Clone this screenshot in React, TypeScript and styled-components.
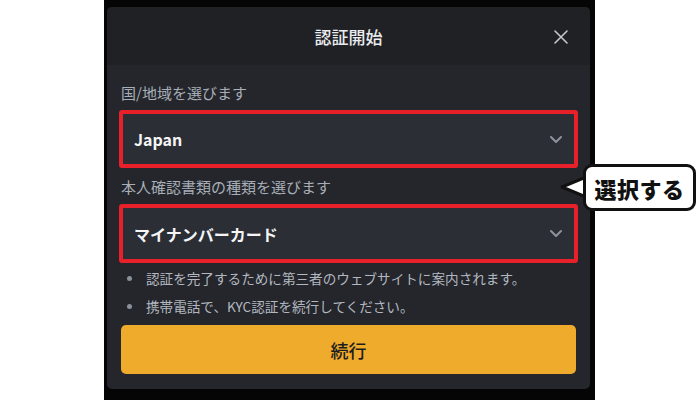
import styled, {createGlobalStyle} from "styled-components";

const GlobalStyle = createGlobalStyle`
    html, body {
        margin: 0;
        padding: 0;
        background: #ffffff;
    }
    body {
        font-family: "Noto Sans CJK JP", "Noto Sans", "Liberation Sans", sans-serif;
    }
`;

const Page = styled.div`
    position: relative;
    width: 700px;
    height: 400px;
    overflow: hidden;
    background: #ffffff;
    display: flex;
    padding-left: 104px;
    box-sizing: border-box;
`;

const Frame = styled.div`
    width: 491px;
    height: 400px;
    background: #050505;
    box-sizing: border-box;
    padding: 7px 5px 11px 3px;
`;

const Card = styled.div`
    height: 100%;
    background: #24262b;
    border-radius: 5px;
    overflow: hidden;
    display: flex;
    flex-direction: column;
`;

const Header = styled.div`
    position: relative;
    height: 58px;
    flex-shrink: 0;
    background: #1f2125;
    display: flex;
    align-items: center;
    justify-content: center;
    color: #eaecef;
    font-size: 17px;
    font-weight: 500;
`;

const CloseButton = styled.div`
    position: absolute;
    right: 21px;
    top: 22px;
    width: 16px;
    height: 16px;
    display: flex;
`;

const Body = styled.div`
    flex: 1;
    padding: 18px 12px 15px;
    display: flex;
    flex-direction: column;
`;

const Label = styled.div<{ $top: number }>`
    margin-top: ${p => p.$top}px;
    padding-left: 2px;
    height: 20px;
    line-height: 20px;
    font-size: 15px;
    color: #a8aeb8;
    white-space: nowrap;
`;

const Select = styled.div<{ $height: number }>`
    margin-top: 7px;
    height: ${p => p.$height}px;
    box-sizing: border-box;
    border: 4px solid #e8202a;
    border-radius: 3px;
    background: #2b2e35;
    display: flex;
    align-items: center;
    justify-content: space-between;
    padding: 0 11px 0 11px;
    color: #f5f5f5;
    font-size: 16px;
    font-weight: 700;
`;

const Notes = styled.ul`
    list-style: none;
    margin: 5px 0 0;
    padding: 0 0 0 8px;
    display: flex;
    flex-direction: column;
    gap: 8px;
`;

const Note = styled.li`
    height: 20px;
    line-height: 20px;
    font-size: 13.6px;
    color: #b3b8c0;
    display: flex;
    align-items: center;
    white-space: nowrap;

    &::before {
        content: "";
        width: 5px;
        height: 5px;
        border-radius: 50%;
        background: #8a919b;
        margin-right: 14px;
        flex-shrink: 0;
    }
`;

const ContinueButton = styled.button`
    margin: 9px 2px 0;
    height: 49px;
    border: none;
    border-radius: 5px;
    background: #efab2b;
    color: #1d1d1f;
    font-family: inherit;
    font-size: 18px;
    font-weight: 500;
`;

const Callout = styled.div`
    position: absolute;
    left: 583px;
    top: 164px;
    width: 113px;
    height: 47px;
    box-sizing: border-box;
    border: 3px solid #111111;
    border-radius: 9px;
    background: #ffffff;
    display: flex;
    align-items: center;
    justify-content: center;
    font-size: 22px;
    font-weight: 900;
    color: #111111;
    letter-spacing: 0.5px;
`;

const CalloutTail = styled.svg`
    position: absolute;
    left: 560px;
    top: 176px;
`;

const Chevron = () => (
    <svg width="14" height="9" viewBox="0 0 14 9">
        <path d="M2 2 L7 7 L12 2" fill="none" stroke="#8e949c" strokeWidth="2" strokeLinecap="round" strokeLinejoin="round"/>
    </svg>
);

export default function App() {
    return (
        <>
            <GlobalStyle/>
            <Page>
                <Frame>
                    <Card>
                        <Header>
                            認証開始
                            <CloseButton>
                                <svg width="16" height="16" viewBox="0 0 16 16">
                                    <path d="M2 2 L14 14 M14 2 L2 14" stroke="#c4c8ce" strokeWidth="1.6" strokeLinecap="round"/>
                                </svg>
                            </CloseButton>
                        </Header>
                        <Body>
                            <Label $top={0}>国/地域を選びます</Label>
                            <Select $height={58}>
                                <span>Japan</span>
                                <Chevron/>
                            </Select>
                            <Label $top={9}>本人確認書類の種類を選びます</Label>
                            <Select $height={59}>
                                <span>マイナンバーカード</span>
                                <Chevron/>
                            </Select>
                            <Notes>
                                <Note>認証を完了するために第三者のウェブサイトに案内されます。</Note>
                                <Note>携帯電話で、KYC認証を続行してください。</Note>
                            </Notes>
                            <ContinueButton>続行</ContinueButton>
                        </Body>
                    </Card>
                </Frame>
                <CalloutTail width="27" height="22" viewBox="0 0 27 22">
                    <path d="M26 1 L2 11 L26 21" fill="#ffffff" stroke="#111111" strokeWidth="3" strokeLinejoin="round"/>
                </CalloutTail>
                <Callout>選択する</Callout>
            </Page>
        </>
    );
}
